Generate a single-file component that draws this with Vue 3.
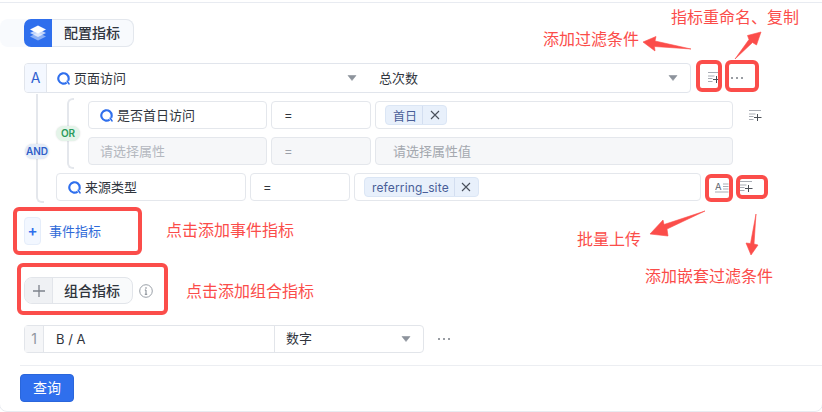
<script setup>
const annotations = [
  { text: '添加过滤条件', cls: 'n1' },
  { text: '指标重命名、复制', cls: 'n2' },
  { text: '点击添加事件指标', cls: 'n3' },
  { text: '批量上传', cls: 'n4' },
  { text: '添加嵌套过滤条件', cls: 'n5' },
  { text: '点击添加组合指标', cls: 'n6' }
]
const boxes = ['b1', 'b2', 'b3', 'b4', 'b5', 'b6']
const arrows = [
  '643,42 656,36.5 655,41 691,49 654.5,46.5 655,51',
  '735,59 749,39.5 747.5,35.5 761,32 756.5,45 752.5,42.5',
  '705,211 667,229 668,236 650,234 663,220 664,224.5',
  '756,214 754,244 758,245 751,255 746,243 750.5,243.5'
]
</script>

<template>
  <div class="page">
    <svg width="0" height="0" class="defs">
      <symbol id="q" viewBox="0 0 14 14">
        <path d="M10.4 11.4A5.6 5.6 0 1 1 12.6 7a5.6 5.6 0 0 1-.6 2.5" fill="none" stroke="#2f6fed" stroke-width="2.3" />
        <path d="M11 9.8l1.9 3" fill="none" stroke="#2f6fed" stroke-width="1.8" stroke-linecap="round" />
      </symbol>
      <symbol id="filter" viewBox="0 0 14 12">
        <path d="M0 .5h12M0 4h6.5M0 6.5h4.5M0 9.5h4.5" stroke="#a9adb5" stroke-width="1" fill="none" />
        <path d="M8.5 4v7M5 7.5h7.5" stroke="#4a4f57" stroke-width="1" fill="none" />
      </symbol>
      <symbol id="caret" viewBox="0 0 10 6">
        <path d="M1 .5h8L5 5.5z" fill="#8d939c" stroke="#8d939c" stroke-width=".6" stroke-linejoin="round" />
      </symbol>
      <symbol id="close" viewBox="0 0 10 10">
        <path d="M1 1l8 8M9 1l-8 8" stroke="#49505c" stroke-width="1.1" fill="none" />
      </symbol>
    </svg>

    <section class="panel">
      <div class="head">
        <div class="head-pill">
          <span class="head-icon">
            <svg width="18" height="16" viewBox="0 0 18 16">
              <path d="M9 7.5l8 4-8 4-8-4z" fill="#fff" opacity=".45" />
              <path d="M9 4l8 4-8 4-8-4z" fill="#fff" opacity=".7" />
              <path d="M9 .5l8 4-8 4-8-4z" fill="#fff" />
            </svg>
          </span>
          <span class="head-text">配置指标</span>
        </div>
      </div>

      <div class="metric">
        <div class="metric-box">
          <span class="letter">A</span>
          <div class="cell cell-event">
            <svg class="q" width="13" height="13"><use href="#q" /></svg>
            <span>页面访问</span>
            <svg class="caret" width="10" height="6"><use href="#caret" /></svg>
          </div>
          <div class="cell cell-count">
            <span>总次数</span>
            <svg class="caret" width="10" height="6"><use href="#caret" /></svg>
          </div>
        </div>
        <svg class="icon-filter first" width="14" height="12"><use href="#filter" /></svg>
        <span class="dots first-dots"><i></i><i></i><i></i></span>
      </div>

      <div class="filters">
        <span class="badge and">AND</span>
        <div class="or-group">
          <span class="badge or">OR</span>
          <div class="row">
            <div class="field w-attr"><svg class="q" width="13" height="13"><use href="#q" /></svg><span class="lift">是否首日访问</span></div>
            <div class="field w-op">=</div>
            <div class="field w-val">
              <span class="tag"><span class="tag-text">首日</span><span class="tag-x"><svg width="10" height="10"><use href="#close" /></svg></span></span>
            </div>
            <svg class="icon-filter side" width="14" height="12"><use href="#filter" /></svg>
          </div>
          <div class="row">
            <div class="field w-attr off ph"><span class="lift">请选择属性</span></div>
            <div class="field w-op off mute">=</div>
            <div class="field w-val off ph2"><span class="lift">请选择属性值</span></div>
          </div>
        </div>
        <div class="row row-source">
          <div class="field w-attr2"><svg class="q" width="13" height="13"><use href="#q" /></svg><span class="lift">来源类型</span></div>
          <div class="field w-op">=</div>
          <div class="field w-val2">
            <span class="tag"><span class="tag-text site">referring_site</span><span class="tag-x"><svg width="10" height="10"><use href="#close" /></svg></span></span>
          </div>
          <svg class="icon-batch" width="14" height="11" viewBox="0 0 14 11">
            <text x="0" y="7.6" font-size="9.5" fill="#5c626c" font-family="Inter, sans-serif">A</text>
            <path d="M8 2h5.5M8 4.5h5.5M8 7h5.5" stroke="#a9adb5" stroke-width="1" />
            <path d="M0 10h13.5" stroke="#a9adb5" stroke-width="1" />
          </svg>
          <svg class="icon-filter nested" width="14" height="12"><use href="#filter" /></svg>
        </div>
      </div>

      <div class="event">
        <span class="event-plus">+</span>
        <span class="event-text">事件指标</span>
      </div>

      <div class="combo">
        <div class="combo-pill">
          <span class="combo-plus">
            <svg width="12" height="12" viewBox="0 0 12 12"><path d="M6 0v12M0 6h12" stroke="#7d838c" stroke-width="1.3" /></svg>
          </span>
          <span class="combo-text">组合指标</span>
        </div>
        <svg class="info" width="14" height="14" viewBox="0 0 14 14">
          <circle cx="7" cy="7" r="6.3" fill="none" stroke="#9aa0a8" stroke-width="1" />
          <path d="M7 6v4.2M5.8 10.3h2.4M5.8 6h1.2" stroke="#7f858e" stroke-width="1" fill="none" />
          <circle cx="7" cy="4" r=".8" fill="#7f858e" />
        </svg>
      </div>

      <div class="formula">
        <div class="formula-box">
          <span class="num">1</span>
          <span class="expr">B / A</span>
          <div class="fmt">
            <span class="lift">数字</span>
            <svg class="caret" width="10" height="6"><use href="#caret" /></svg>
          </div>
        </div>
        <span class="dots formula-dots"><i></i><i></i><i></i></span>
      </div>

      <div class="divider"></div>
      <button class="query" type="button">查询</button>
    </section>

    <div v-for="b in boxes" :key="b" class="mark" :class="b"></div>
    <svg class="arrows" width="822" height="412" viewBox="0 0 822 412">
      <polygon v-for="(p, i) in arrows" :key="i" :points="p" fill="#fb4d4a" stroke="#fb4d4a" stroke-width=".6" stroke-linejoin="round" />
    </svg>
    <span v-for="a in annotations" :key="a.cls" class="note" :class="a.cls">{{ a.text }}</span>
  </div>
</template>

<style scoped>
.page {
  position: relative;
  width: 822px;
  height: 412px;
  overflow: hidden;
  background: #fff;
  font-family: Inter, "Noto Sans CJK SC", sans-serif;
  font-size: 13px;
  color: #30353d;
}
.defs { position: absolute; }
.panel {
  box-sizing: border-box;
  height: 410px;
  margin: 2px -1px 0 -1px;
  border: 1px solid #e8ebf1;
  border-radius: 0 0 8px 8px;
}
.head { margin-top: 16px; height: 28px; }
.head-pill {
  display: flex;
  box-sizing: border-box;
  width: 134px;
  height: 28px;
  padding-left: 24px;
  background: #f8fafd;
  border-radius: 8px;
}
.head-icon {
  display: flex;
  align-items: center;
  justify-content: center;
  width: 28px;
  background: #2f6fed;
  border-radius: 7px 0 0 7px;
}
.head-text {
  flex: 1;
  box-sizing: border-box;
  padding-left: 12px;
  line-height: 26px;
  font-size: 14px;
  font-weight: 500;
  border: 1px solid #e3e7ed;
  border-left: 0;
  border-radius: 0 8px 8px 0;
}
.metric {
  display: flex;
  align-items: center;
  margin: 16px 0 0 24px;
  height: 30px;
}
.metric-box {
  display: flex;
  box-sizing: border-box;
  width: 667px;
  height: 30px;
  border: 1px solid #e1e5ec;
  border-radius: 4px;
}
.letter {
  width: 21px;
  flex: none;
  text-align: center;
  line-height: 28px;
  font-size: 14px;
  color: #2f5fd0;
  background: #f4f8ff;
  border-right: 1px solid #e1e5ec;
  border-radius: 3px 0 0 3px;
}
.cell {
  display: flex;
  align-items: center;
  box-sizing: border-box;
}
.cell > span { margin-bottom: 2px; }
.lift { margin-bottom: 2px; }
.cell-event { width: 318px; padding-left: 10px; }
.cell-count { flex: 1; padding-left: 14px; }
.q { flex: none; margin-right: 4px; }
.caret { margin-left: auto; flex: none; }
.cell-event .caret { margin-right: 8px; }
.cell-count .caret { margin-right: 12px; }
.icon-filter.first { margin-left: 17px; }
.dots { display: inline-flex; gap: 3px; }
.dots i { width: 2px; height: 2px; background: #777c85; border-radius: 50%; }
.first-dots { margin-left: 9px; }
.filters {
  position: relative;
  margin-top: 8px;
}
.filters::before {
  content: "";
  position: absolute;
  left: 36px;
  top: -7px;
  width: 6px;
  height: 107px;
  border-left: 2px solid #e4e7ec;
  border-bottom: 2px solid #e4e7ec;
  border-radius: 0 0 0 6px;
}
.or-group {
  position: relative;
  margin-left: 88px;
}
.or-group::before {
  content: "";
  position: absolute;
  left: -21px;
  top: -3px;
  width: 5px;
  height: 67px;
  border: 2px solid #e4e7ec;
  border-right: 0;
  border-radius: 6px 0 0 6px;
}
.row { display: flex; align-items: center; gap: 4px; height: 28px; }
.or-group .row + .row { margin-top: 8px; }
.row-source { margin: 8px 0 0 56px; }
.field {
  display: flex;
  align-items: center;
  box-sizing: border-box;
  flex: none;
  height: 28px;
  border: 1px solid #e4e7ec;
  border-radius: 4px;
  background: #fff;
}
.w-attr { width: 179px; padding-left: 11px; }
.w-op { width: 100px; padding-left: 12px; }
.w-val { width: 358px; padding-left: 9px; }
.w-attr2 { width: 190px; padding-left: 11px; }
.w-val2 { width: 347px; padding-left: 9px; }
.off { background: #f6f7f9; }
.ph { color: #b4b8bf; }
.mute { color: #9ca1a9; }
.ph2 { padding-left: 17px; color: #a4a8af; }
.tag {
  display: flex;
  align-items: center;
  box-sizing: border-box;
  height: 20px;
  font-size: 12px;
  color: #485e98;
  background: #e8f0fb;
  border: 1px solid #dbe6f5;
  border-radius: 4px;
}
.tag-text { padding: 0 5px 0 7px; }
.tag-text.site { letter-spacing: .15px; }
.tag-x {
  display: flex;
  align-items: center;
  justify-content: center;
  width: 23px;
  height: 18px;
  border-left: 1px solid #d3def0;
}
.icon-filter.side { position: absolute; left: 661px; top: 9px; }
.icon-batch { margin-left: 10px; }
.icon-filter.nested { margin-left: 7px; }
.event {
  display: flex;
  align-items: center;
  margin: 16px 0 0 24px;
  height: 28px;
}
.event-plus {
  box-sizing: border-box;
  width: 17px;
  height: 28px;
  line-height: 25px;
  text-align: center;
  font-size: 15px;
  font-weight: 600;
  color: #2f6fed;
  background: #f2f7ff;
  border: 1px solid #e5edfa;
  border-radius: 4px;
}
.event-text { margin: 0 0 2px 8px; color: #2f6ad8; }
.combo {
  display: flex;
  align-items: center;
  margin: 32px 0 0 24px;
  height: 27px;
}
.combo-pill {
  display: flex;
  box-sizing: border-box;
  width: 109px;
  height: 27px;
  border: 1px solid #e2e5ea;
  border-radius: 8px;
  background: #f9fafb;
}
.combo-plus {
  display: flex;
  align-items: center;
  justify-content: center;
  width: 27px;
  background: #eff1f4;
  border-right: 1px solid #e2e5ea;
  border-radius: 7px 0 0 7px;
}
.combo-text {
  padding-left: 11px;
  line-height: 25px;
  font-size: 14px;
  font-weight: 500;
}
.info { margin-left: 6px; }
.formula {
  display: flex;
  align-items: center;
  margin: 21px 0 0 24px;
  height: 28px;
}
.formula-box {
  display: flex;
  box-sizing: border-box;
  width: 400px;
  height: 28px;
  border: 1px solid #e2e5ea;
  border-radius: 4px;
  line-height: 26px;
}
.num {
  flex: none;
  width: 18px;
  text-align: center;
  font-size: 14px;
  color: #9096a0;
  background: #f5f6f8;
  border-right: 1px solid #e2e5ea;
}
.expr {
  flex: none;
  box-sizing: border-box;
  width: 231px;
  padding-left: 12px;
  border-right: 1px solid #e2e5ea;
}
.fmt {
  flex: 1;
  display: flex;
  align-items: center;
  padding-left: 11px;
}
.fmt .caret { margin-right: 12px; }
.formula-dots { margin-left: 14px; }
.divider {
  margin: 12px 0 0 20px;
  height: 1px;
  background: #eceef2;
}
.query {
  display: block;
  margin: 8px 0 0 20px;
  width: 54px;
  height: 28px;
  padding: 0 0 2px;
  font: inherit;
  font-size: 14px;
  color: #fff;
  background: #2f6fed;
  border: 1px solid #2a66db;
  border-radius: 4px;
}
.badge {
  position: absolute;
  text-align: center;
  font-size: 10px;
  font-weight: 600;
  line-height: 15px;
  height: 15px;
  border-radius: 8px;
  box-shadow: 0 0 2px rgba(0, 0, 0, .12);
}
.and {
  left: 25px;
  top: 43px;
  width: 24px;
  color: #2f5fc8;
  background: #e4ecf8;
  z-index: 1;
}
.or {
  left: -32px;
  top: 25px;
  width: 24px;
  color: #2a9a5b;
  background: #e4f4e9;
  z-index: 1;
}
.mark {
  position: absolute;
  box-sizing: border-box;
  border: 4px solid #fb4d4a;
  border-radius: 6px;
}
.b1 { left: 696px; top: 60px; width: 26px; height: 32px; }
.b2 { left: 725px; top: 60px; width: 34px; height: 32px; }
.b3 { left: 705px; top: 174px; width: 28px; height: 28px; }
.b4 { left: 736px; top: 175px; width: 32px; height: 24px; }
.b5 { left: 13px; top: 207px; width: 129px; height: 48px; }
.b6 { left: 17px; top: 263px; width: 151px; height: 52px; }
.arrows { position: absolute; left: 0; top: 0; pointer-events: none; }
.note {
  position: absolute;
  font-size: 16px;
  line-height: 22px;
  white-space: nowrap;
  color: #fb4d4a;
}
.n1 { left: 543px; top: 28px; }
.n2 { left: 671px; top: 6px; }
.n3 { left: 166px; top: 219px; }
.n4 { left: 577px; top: 228px; }
.n5 { left: 645px; top: 265px; }
.n6 { left: 186px; top: 280px; }
</style>
